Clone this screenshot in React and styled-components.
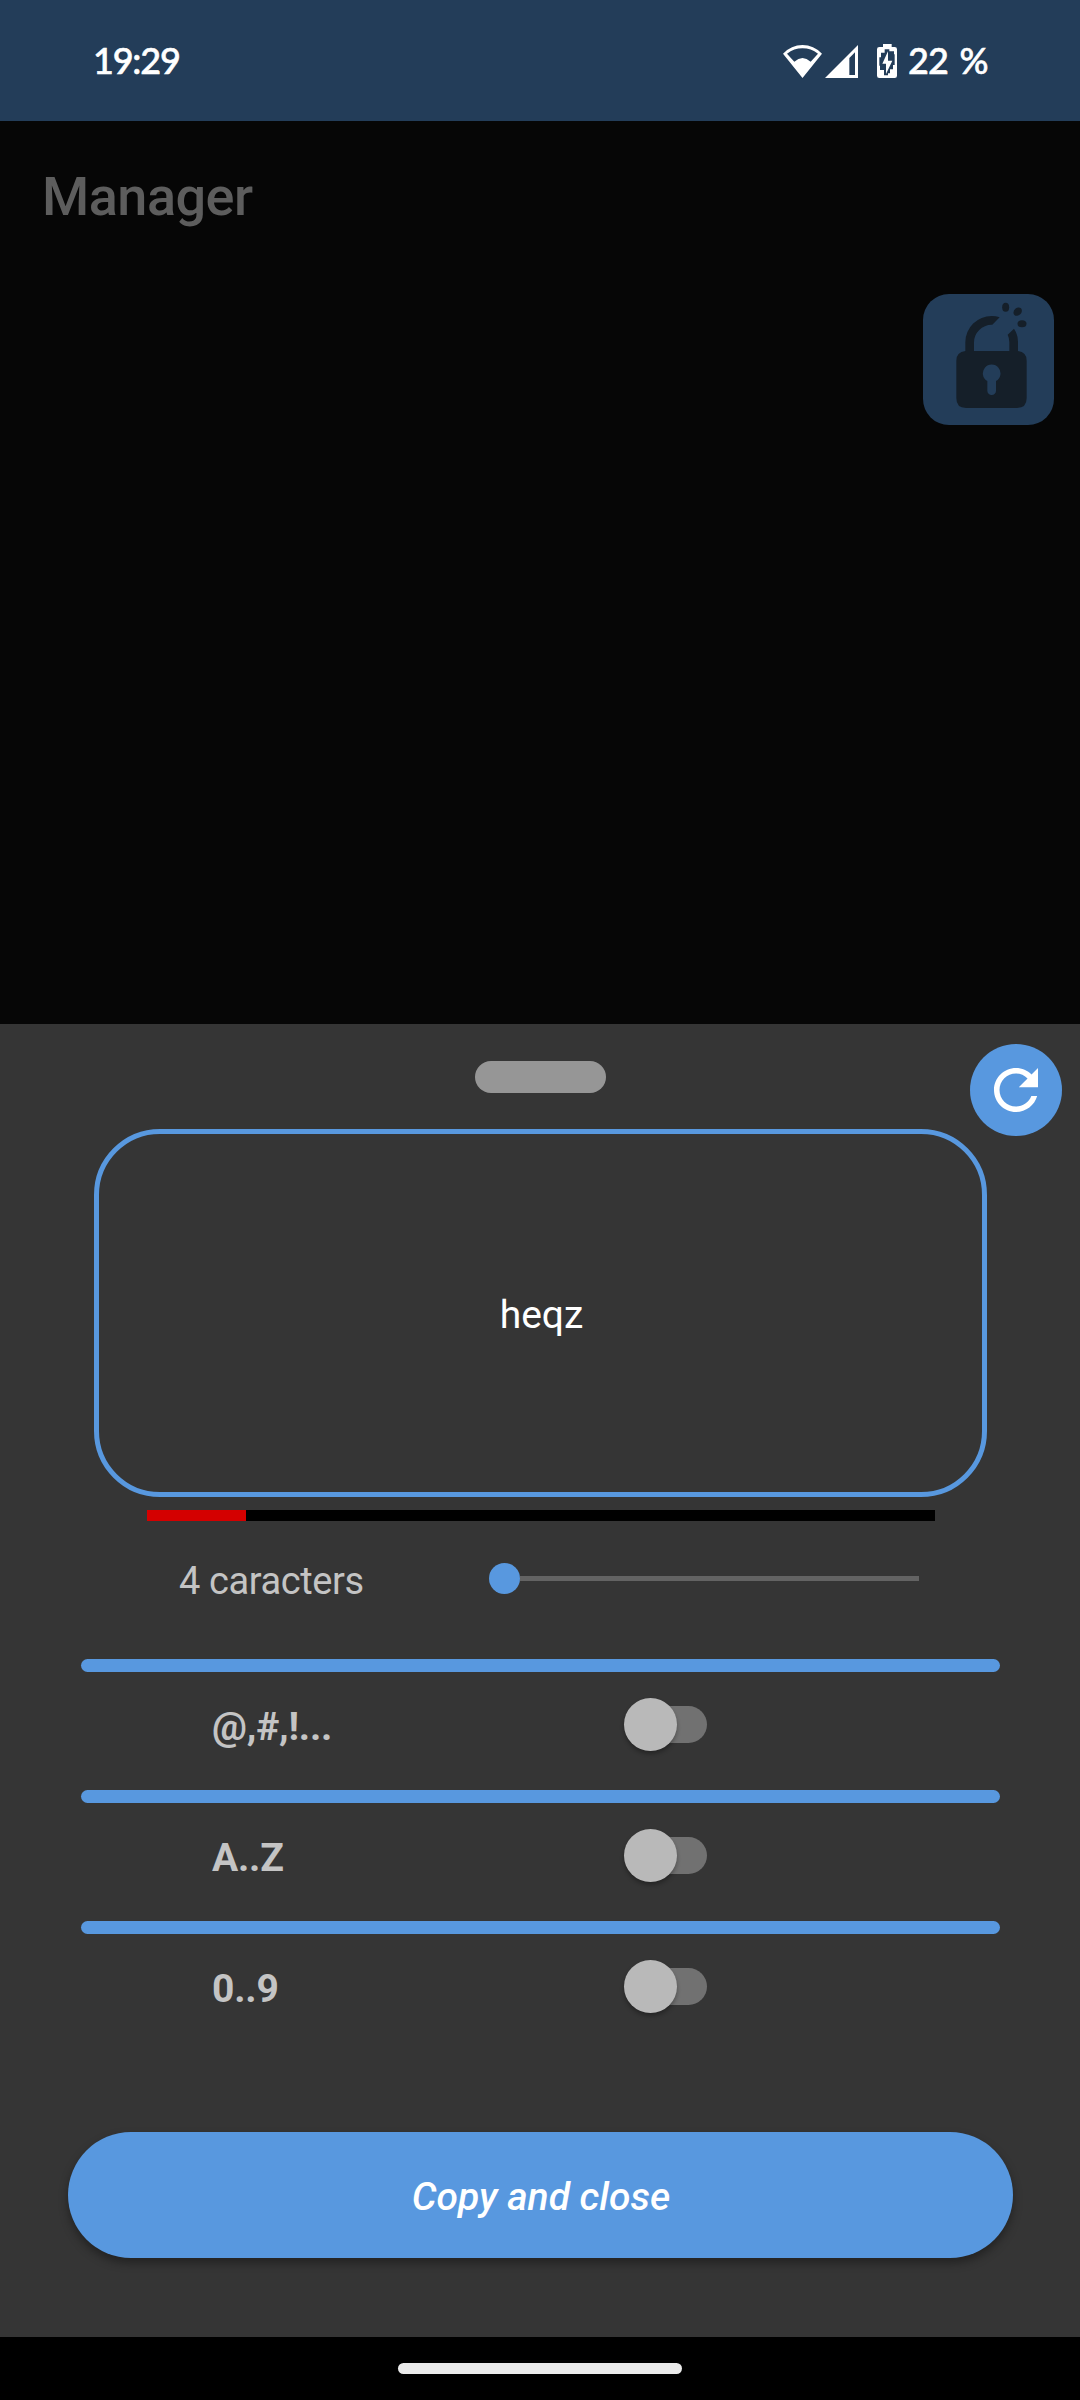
import React, { useState } from 'react';
import styled, { createGlobalStyle } from 'styled-components';

const GlobalStyle = createGlobalStyle`
  * { box-sizing: border-box; }
  body { margin: 0; background: #060606; font-family: Roboto, 'Noto Sans', sans-serif; }
  button { font: inherit; border: 0; padding: 0; margin: 0; }
  svg { display: block; flex: none; }
`;

const blue = '#5898df';
const navy = '#233d59';

const Screen = styled.div`
  width: 1080px;
  height: 2400px;
  display: flex;
  flex-direction: column;
  overflow: hidden;
`;

const StatusBar = styled.header`
  height: 121px;
  padding: 0 93px 0 93px;
  background: ${navy};
  color: #fff;
  display: flex;
  align-items: flex-start;
  justify-content: space-between;
  font-family: Lato, Roboto, sans-serif;
  font-weight: 500;
`;

const Clock = styled.span`
  font-size: 36px;
  line-height: 44px;
  margin-top: 38px;
  letter-spacing: -1.2px;
  -webkit-text-stroke: 0.6px #fff;
`;

const Indicators = styled.div`
  display: flex;
  padding-top: 44px;
  height: 100px;
  width: 204px;
`;

const Battery = styled.span`
  font-size: 36px;
  line-height: 44px;
  margin: -6px 0 0 11px;
  letter-spacing: -0.8px;
  word-spacing: 3px;
  white-space: nowrap;
  -webkit-text-stroke: 0.6px #fff;
`;

const Page = styled.main`
  height: 903px;
  background: #060606;
  display: flex;
  flex-direction: column;
`;

const Title = styled.h1`
  margin: 44px 0 0 42px;
  font-size: 54px;
  line-height: 64px;
  font-weight: 500;
  letter-spacing: -0.5px;
  color: #5d5d5d;
`;

const UnlockButton = styled.button`
  align-self: flex-end;
  width: 131px;
  height: 131px;
  margin: 65px 26px 0 0;
  border-radius: 26px;
  background: ${navy};
`;

const Sheet = styled.section`
  position: relative;
  height: 1313px;
  background: #353535;
  color: #c4c4c4;
  display: flex;
  flex-direction: column;
`;

const Handle = styled.div`
  width: 131px;
  height: 32px;
  margin: 37px 0 0 475px;
  border-radius: 16px;
  background: #969696;
`;

const RefreshButton = styled.button`
  position: absolute;
  top: 20px;
  right: 18px;
  width: 92px;
  height: 92px;
  border-radius: 50%;
  background: ${blue};
  display: grid;
  place-items: center;
`;

const PasswordBox = styled.div`
  width: 893px;
  height: 368px;
  margin: 36px 0 0 94px;
  padding: 3px 0 0 2px;
  border: 5px solid ${blue};
  border-radius: 66px;
  display: grid;
  place-items: center;
  color: #fff;
  font-size: 39px;
  line-height: 46px;
`;

const StrengthTrack = styled.div`
  width: 788px;
  height: 11px;
  margin: 13px 0 0 147px;
  background: #000;
`;

const StrengthFill = styled.div`
  height: 100%;
  background: #d40000;
`;

const LengthRow = styled.div`
  height: 138px;
  padding: 0 161px 24px 179px;
  display: flex;
  align-items: center;
  justify-content: space-between;
`;

const LengthLabel = styled.span`
  font-size: 38px;
  line-height: 46px;
  padding-top: 5px;
  letter-spacing: -0.4px;
`;

const Slider = styled.div`
  width: 430px;
  height: 31px;
  display: flex;
  align-items: center;
`;

const SliderThumb = styled.div`
  width: 31px;
  height: 31px;
  border-radius: 50%;
  background: ${blue};
`;

const SliderLine = styled.div`
  flex: 1;
  height: 5px;
  background: #636363;
`;

const Option = styled.div`
  height: 131px;
  display: flex;
  flex-direction: column;
`;

const Divider = styled.div`
  flex: none;
  width: 919px;
  height: 13px;
  margin-left: 81px;
  border-radius: 7px;
  background: ${blue};
`;

const OptionRow = styled.div`
  height: 104px;
  padding-left: 212px;
  display: flex;
  align-items: center;
`;

const OptionLabel = styled.span`
  width: 421px;
  padding-top: 6px;
  font-size: 39px;
  line-height: 46px;
  font-weight: 700;
  letter-spacing: -0.2px;
`;

const Toggle = styled.button`
  width: 74px;
  height: 37px;
  border-radius: 19px;
  background: ${(p) => (p.$on ? '#3f6ea3' : '#717171')};
  display: flex;
  align-items: center;
  justify-content: ${(p) => (p.$on ? 'flex-end' : 'flex-start')};
`;

const Knob = styled.span`
  flex: none;
  width: 53px;
  height: 53px;
  margin: 0 -9px;
  border-radius: 50%;
  background: ${(p) => (p.$on ? blue : '#b9b9b9')};
  box-shadow: 0 3px 4px rgba(0, 0, 0, 0.3);
`;

const CopyButton = styled.button`
  width: 945px;
  height: 126px;
  margin: 80px 0 0 68px;
  border-radius: 63px;
  background: ${blue};
  box-shadow: 0 5px 10px rgba(0, 0, 0, 0.36);
  color: #fff;
  font-size: 39px;
  line-height: 46px;
  font-weight: 500;
  font-style: italic;
  padding: 4px 0 0 1px;
`;

const NavBar = styled.footer`
  height: 63px;
  background: #000;
  display: flex;
  justify-content: center;
  padding-top: 26px;
`;

const NavPill = styled.div`
  width: 284px;
  height: 11px;
  border-radius: 6px;
  background: #ebebeb;
`;

const WifiIcon = () => (
  <svg width="39" height="34" viewBox="69 72 117 102" fill="#fff">
    <path fillRule="evenodd" d="M127.500 174L69 101Q94 75 127.500 75Q161 75 186 101ZM103 125Q127.500 103 152 125L174 101Q153 85 127.500 85Q102 85 81 101Z" />
  </svg>
);

const SignalIcon = () => (
  <svg width="33" height="34" viewBox="195 72 99 102" fill="#fff" style={{ marginLeft: 3 }}>
    <path fillRule="evenodd" d="M195 174L294 75V174ZM268 114V165H285V97Z" />
  </svg>
);

const BatteryIcon = () => (
  <svg width="20" height="34" viewBox="351 72 60 102" fill="#fff" style={{ marginLeft: 19 }}>
    <path d="M369 72H395V81H404Q411 81 411 88V167Q411 174 404 174H358Q351 174 351 167V88Q351 81 358 81H369Z" />
    <path fill={navy} d="M374 88H388V94H402V103H404V135H399V148H390V160H384V166H372V150H360V137H358V112H363V98H374Z" />
    <path d="M384 94L367 131H378V162L397 122H384Z" />
  </svg>
);

const UnlockIcon = () => (
  <svg width="131" height="131" viewBox="69 72 393 393" fill="#151f29">
    <path fillRule="evenodd" d="M196 243V216A79 79 0 0 1 275 138Q288 138 299 142L277 164.500H275A53 53 0 0 0 222 217V243H328V217Q328 204 323 194L342 176Q354 194 354 216V243Q380 246 380 272V385Q380 414 351 414H198Q169 414 169 385V272Q169 246 196 243ZM262 333V362A13 13 0 0 0 288 362V333A26.500 26.500 0 1 0 262 333Z" />
    <ellipse cx="317" cy="112" rx="10.500" ry="13.500" />
    <ellipse cx="353" cy="125" rx="14" ry="11" transform="rotate(-45 353 125)" />
    <ellipse cx="366" cy="161" rx="13.500" ry="10.500" />
  </svg>
);

const RefreshIcon = () => (
  <svg width="64" height="64" viewBox="0 0 512 512" fill="#fff">
    <path d="M256 388c-72.597 0-132-59.405-132-132 0-72.601 59.403-132 132-132 36.3 0 69.299 15.4 92.406 39.601L278 234h154V80l-51.698 51.702C348.406 99.798 304.406 80 256 80c-96.797 0-176 79.203-176 176s78.094 176 176 176c81.045 0 148.287-54.134 169.401-128H378.85c-18.745 49.561-67.138 84-122.85 84z" />
  </svg>
);

const options = ['@,#,!...', 'A..Z', '0..9'];

export default function App() {
  const [enabled, setEnabled] = useState({});
  const strength = 12.56;

  return (
    <Screen>
      <GlobalStyle />
      <StatusBar>
        <Clock>19:29</Clock>
        <Indicators>
          <WifiIcon />
          <SignalIcon />
          <BatteryIcon />
          <Battery>22 %</Battery>
        </Indicators>
      </StatusBar>
      <Page>
        <Title>Manager</Title>
        <UnlockButton aria-label="Unlock">
          <UnlockIcon />
        </UnlockButton>
      </Page>
      <Sheet>
        <Handle />
        <RefreshButton aria-label="Refresh">
          <RefreshIcon />
        </RefreshButton>
        <PasswordBox>heqz</PasswordBox>
        <StrengthTrack>
          <StrengthFill style={{ width: `${strength}%` }} />
        </StrengthTrack>
        <LengthRow>
          <LengthLabel>4 caracters</LengthLabel>
          <Slider>
            <SliderThumb />
            <SliderLine />
          </Slider>
        </LengthRow>
        {options.map((label) => (
          <Option key={label}>
            <Divider />
            <OptionRow>
              <OptionLabel>{label}</OptionLabel>
              <Toggle
                $on={!!enabled[label]}
                aria-label={label}
                onClick={() => setEnabled((s) => ({ ...s, [label]: !s[label] }))}
              >
                <Knob $on={!!enabled[label]} />
              </Toggle>
            </OptionRow>
          </Option>
        ))}
        <CopyButton>Copy and close</CopyButton>
      </Sheet>
      <NavBar>
        <NavPill />
      </NavBar>
    </Screen>
  );
}
